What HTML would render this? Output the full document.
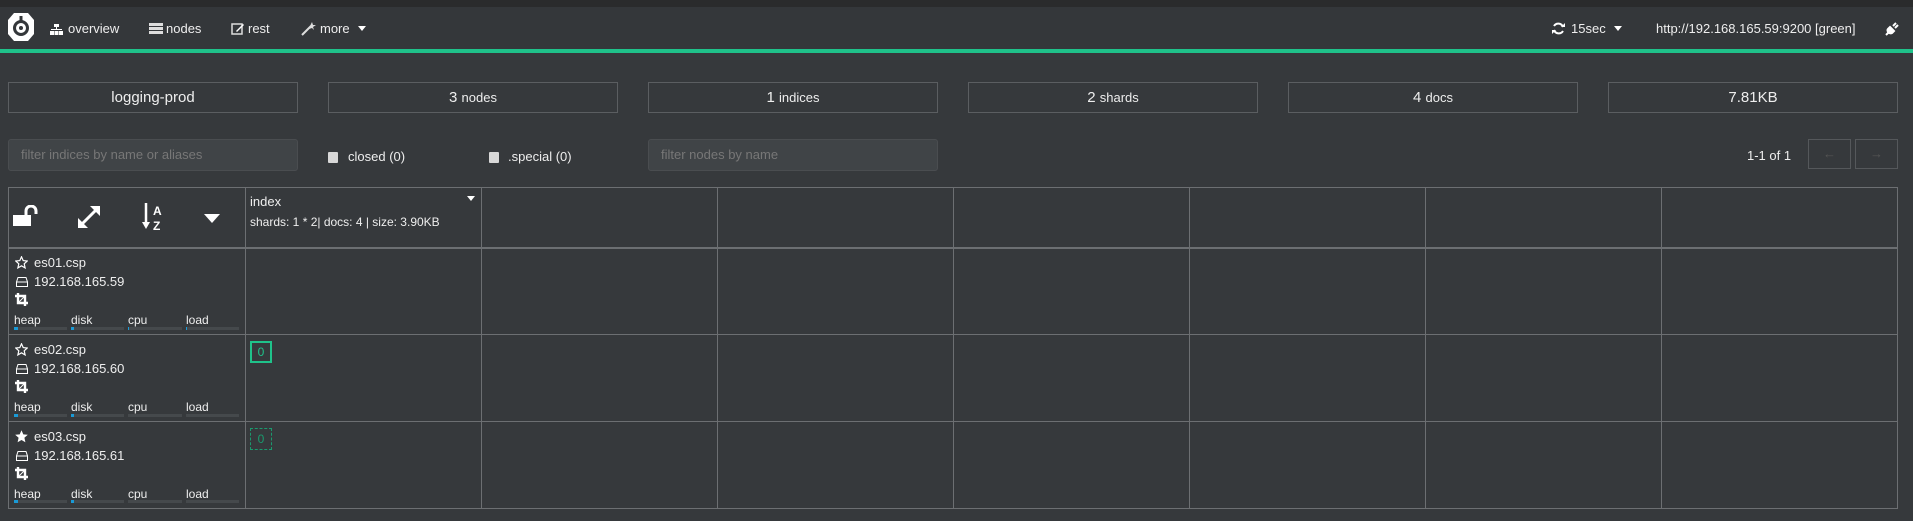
<!DOCTYPE html>
<html><head><meta charset="utf-8"><style>
*{box-sizing:border-box;margin:0;padding:0}
body{width:1913px;height:521px;background:#36393c;font-family:"Liberation Sans",sans-serif;color:#eee;position:relative;overflow:hidden;font-size:13px}
.a{position:absolute}
.top{left:0;top:0;width:1913px;height:7px;background:#2a2b2c}
.nav{left:0;top:7px;width:1913px;height:42px;background:#34373a}
.green{left:0;top:49px;width:1913px;height:4px;background:#1fc28a}
.t{position:absolute;white-space:nowrap;line-height:1}
.box{position:absolute;top:82px;height:31px;width:290px;border:1px solid #5b5e61;text-align:center;line-height:29px;font-size:15px}
.box small{font-size:13px}
.inp{position:absolute;top:139px;height:32px;background:#404447;border:1px solid #4a4d50;border-radius:3px;color:#777;font-size:13px;line-height:30px;padding-left:12px}
.cb{position:absolute;top:152px;width:10px;height:11px;background:#d8d8d8;border-radius:1px}
.btn{position:absolute;top:139px;width:43px;height:30px;border:1px solid #55585b;color:#555;text-align:center;line-height:28px}
.hl{position:absolute;height:2px;background:#6c6f72}
.vl{position:absolute;width:1px;background:#6c6f72}
.bar{position:absolute;height:3px;background:#45494c}
.bar i{position:absolute;left:0;top:0;height:3px;width:4px;background:#1a9ad6}
</style></head><body>
<div class="a top"></div><div class="a nav"></div><div class="a green"></div>
<svg class="a" style="left:8px;top:12px" width="26" height="30" viewBox="0 0 26 30"><path d="M6 1 L20 1 L26 8 L26 22 L20 29 L6 29 L0 22 L0 8Z" fill="#fff"/><circle cx="13" cy="16" r="6.5" fill="none" stroke="#34373a" stroke-width="3"/><rect x="11.5" y="4" width="3" height="7" fill="#34373a"/><circle cx="13" cy="16" r="2" fill="#34373a"/></svg>
<svg class="a" style="left:50px;top:24px" width="13" height="11"><rect x="4" y="0" width="5" height="3" fill="#fff"/><rect x="6" y="3" width="1" height="3" fill="#fff"/><rect x="1" y="5" width="11" height="1" fill="#fff"/><rect x="0" y="7" width="4" height="4" fill="#fff"/><rect x="4.5" y="7" width="4" height="4" fill="#fff"/><rect x="9" y="7" width="4" height="4" fill="#fff"/></svg>
<div class="t" style="left:68px;top:22px;font-size:13px">overview</div>
<svg class="a" style="left:149px;top:23px" width="14" height="12"><rect x="0" y="0" width="14" height="3" fill="#ddd"/><rect x="0" y="4" width="14" height="3" fill="#ddd"/><rect x="0" y="8" width="14" height="3" fill="#ddd"/></svg>
<div class="t" style="left:166px;top:22px">nodes</div>
<svg class="a" style="left:231px;top:22px" width="14" height="13"><rect x="1" y="2" width="10" height="10" fill="none" stroke="#ddd" stroke-width="1.5"/><path d="M5 9 L12 2 L13 3 L6 10Z" fill="#fff"/></svg>
<div class="t" style="left:248px;top:22px">rest</div>
<svg class="a" style="left:301px;top:22px" width="15" height="14"><path d="M1 13 L10 4" stroke="#ddd" stroke-width="2"/><path d="M11 0 L12 3 L15 3 L12 5 L13 8 L11 6 L8 7 L9 4 Z" fill="#ddd"/></svg>
<div class="t" style="left:320px;top:22px">more</div>
<svg class="a" style="left:358px;top:26px" width="8" height="5"><path d="M0 0 L8 0 L4 5Z" fill="#fff"/></svg>
<svg class="a" style="left:1552px;top:22px" width="13" height="13" viewBox="0 0 13 13"><path d="M11 5 A5 5 0 0 0 2 4" fill="none" stroke="#fff" stroke-width="2"/><path d="M2 8 A5 5 0 0 0 11 9" fill="none" stroke="#fff" stroke-width="2"/><path d="M9 5 L13 5 L13 1Z M0 8 L4 8 L0 12Z" fill="#fff"/></svg>
<div class="t" style="left:1571px;top:22px">15sec</div>
<svg class="a" style="left:1614px;top:26px" width="8" height="5"><path d="M0 0 L8 0 L4 5Z" fill="#fff"/></svg>
<div class="t" style="left:1656px;top:22px">http://192.168.165.59:9200 [green]</div>
<svg class="a" style="left:1885px;top:22px" width="14" height="14"><path d="M1 13 L4 10 M5 5 L9 9 L7 11 Q5 12 3 10 Q2 8 3 7Z M8 4 L11 1 M10 6 L13 3" stroke="#fff" stroke-width="2" fill="#fff"/></svg>

<div class="box" style="left:8px">logging-prod</div>
<div class="box" style="left:328px">3 <small>nodes</small></div>
<div class="box" style="left:648px">1 <small>indices</small></div>
<div class="box" style="left:968px">2 <small>shards</small></div>
<div class="box" style="left:1288px">4 <small>docs</small></div>
<div class="box" style="left:1608px">7.81KB</div>

<div class="inp" style="left:8px;width:290px">filter indices by name or aliases</div>
<div class="cb" style="left:328px"></div><div class="t" style="left:348px;top:150px">closed (0)</div>
<div class="cb" style="left:489px"></div><div class="t" style="left:508px;top:150px">.special (0)</div>
<div class="inp" style="left:648px;width:290px">filter nodes by name</div>
<div class="t" style="left:1747px;top:149px">1-1 of 1</div>
<div class="btn" style="left:1808px">←</div><div class="btn" style="left:1855px">→</div>

<!-- table grid -->
<div class="hl" style="left:8px;top:187px;width:1890px;height:1px"></div>
<div class="hl" style="left:8px;top:247px;width:1890px"></div>
<div class="hl" style="left:8px;top:334px;width:1890px;height:1px"></div>
<div class="hl" style="left:8px;top:421px;width:1890px;height:1px"></div>
<div class="hl" style="left:8px;top:508px;width:1890px;height:1px"></div>
<div class="vl" style="left:8px;top:187px;height:322px"></div>
<div class="vl" style="left:245px;top:187px;height:322px"></div>
<div class="vl" style="left:481px;top:187px;height:322px"></div>
<div class="vl" style="left:717px;top:187px;height:322px"></div>
<div class="vl" style="left:953px;top:187px;height:322px"></div>
<div class="vl" style="left:1189px;top:187px;height:322px"></div>
<div class="vl" style="left:1425px;top:187px;height:322px"></div>
<div class="vl" style="left:1661px;top:187px;height:322px"></div>
<div class="vl" style="left:1897px;top:187px;height:322px"></div>

<svg class="a" style="left:13px;top:205px" width="26" height="21"><rect x="0" y="10" width="18" height="11" fill="#fff"/><path d="M13 10 V6 A5 5 0 0 1 23 6 V9" fill="none" stroke="#fff" stroke-width="3"/></svg>
<svg class="a" style="left:77px;top:205px" width="24" height="24"><path d="M3 21 L21 3" stroke="#fff" stroke-width="3"/><path d="M13 1 L23 1 L23 11Z M1 13 L1 23 L11 23Z" fill="#fff"/></svg>
<svg class="a" style="left:142px;top:203px" width="25" height="28"><path d="M4 0 V22" stroke="#fff" stroke-width="2.5"/><path d="M0 19 L8 19 L4 26Z" fill="#fff"/><text x="11" y="12" font-family="Liberation Sans" font-weight="bold" font-size="12" fill="#fff">A</text><text x="11" y="27" font-family="Liberation Sans" font-weight="bold" font-size="12" fill="#fff">Z</text></svg>
<svg class="a" style="left:204px;top:214px" width="16" height="9"><path d="M0 0 L16 0 L8 9Z" fill="#fff"/></svg>
<div class="t" style="left:250px;top:195px">index</div>
<svg class="a" style="left:467px;top:196px" width="8" height="5"><path d="M0 0 L8 0 L4 5Z" fill="#fff"/></svg>
<div class="t" style="left:250px;top:216px;font-size:12px">shards: 1 * 2| docs: 4 | size: 3.90KB</div>

<!-- node rows -->
<div class="a" style="left:0;top:248px">
 <svg class="a" style="left:15px;top:8px" width="13" height="13"><path d="M6.5 0.8 L8.2 4.6 L12.3 5 L9.2 7.8 L10.1 11.9 L6.5 9.8 L2.9 11.9 L3.8 7.8 L0.7 5 L4.8 4.6Z" fill="none" stroke="#fff" stroke-width="1.2"/></svg>
 <div class="t" style="left:34px;top:8px">es01.csp</div>
 <svg class="a" style="left:16px;top:29px" width="12" height="10"><path d="M2 0.5 H10 L11.5 5 V9.5 H0.5 V5Z M0.5 5 H11.5" fill="none" stroke="#fff" stroke-width="1"/></svg>
 <div class="t" style="left:34px;top:27px">192.168.165.59</div>
 <svg class="a" style="left:15px;top:45px" width="13" height="13"><path d="M3 0 V10 H13 M0 3 H10 V13" fill="none" stroke="#fff" stroke-width="2.4"/><path d="M4 9 L9 4" stroke="#fff"/></svg>
 <div class="t" style="left:14px;top:66px;font-size:12px">heap</div><div class="t" style="left:71px;top:66px;font-size:12px">disk</div><div class="t" style="left:128px;top:66px;font-size:12px">cpu</div><div class="t" style="left:186px;top:66px;font-size:12px">load</div>
 <div class="bar" style="left:14px;top:79px;width:53px"><i></i></div><div class="bar" style="left:71px;top:79px;width:53px"><i style="width:3px"></i></div><div class="bar" style="left:128px;top:79px;width:54px"><i style="width:1px"></i></div><div class="bar" style="left:186px;top:79px;width:53px"><i style="width:1px"></i></div>
</div>
<div class="a" style="left:0;top:335px">
 <svg class="a" style="left:15px;top:8px" width="13" height="13"><path d="M6.5 0.8 L8.2 4.6 L12.3 5 L9.2 7.8 L10.1 11.9 L6.5 9.8 L2.9 11.9 L3.8 7.8 L0.7 5 L4.8 4.6Z" fill="none" stroke="#fff" stroke-width="1.2"/></svg>
 <div class="t" style="left:34px;top:8px">es02.csp</div>
 <svg class="a" style="left:16px;top:29px" width="12" height="10"><path d="M2 0.5 H10 L11.5 5 V9.5 H0.5 V5Z M0.5 5 H11.5" fill="none" stroke="#fff" stroke-width="1"/></svg>
 <div class="t" style="left:34px;top:27px">192.168.165.60</div>
 <svg class="a" style="left:15px;top:45px" width="13" height="13"><path d="M3 0 V10 H13 M0 3 H10 V13" fill="none" stroke="#fff" stroke-width="2.4"/><path d="M4 9 L9 4" stroke="#fff"/></svg>
 <div class="t" style="left:14px;top:66px;font-size:12px">heap</div><div class="t" style="left:71px;top:66px;font-size:12px">disk</div><div class="t" style="left:128px;top:66px;font-size:12px">cpu</div><div class="t" style="left:186px;top:66px;font-size:12px">load</div>
 <div class="bar" style="left:14px;top:79px;width:53px"><i></i></div><div class="bar" style="left:71px;top:79px;width:53px"><i style="width:3px"></i></div><div class="bar" style="left:128px;top:79px;width:54px"><i style="width:0"></i></div><div class="bar" style="left:186px;top:79px;width:53px"><i style="width:0"></i></div>
</div>
<div class="a" style="left:0;top:422px">
 <svg class="a" style="left:15px;top:8px" width="13" height="13"><path d="M6.5 0.3 L8.3 4.4 L12.8 4.8 L9.4 7.8 L10.4 12.3 L6.5 10 L2.6 12.3 L3.6 7.8 L0.2 4.8 L4.7 4.4Z" fill="#fff"/></svg>
 <div class="t" style="left:34px;top:8px">es03.csp</div>
 <svg class="a" style="left:16px;top:29px" width="12" height="10"><path d="M2 0.5 H10 L11.5 5 V9.5 H0.5 V5Z M0.5 5 H11.5" fill="none" stroke="#fff" stroke-width="1"/></svg>
 <div class="t" style="left:34px;top:27px">192.168.165.61</div>
 <svg class="a" style="left:15px;top:45px" width="13" height="13"><path d="M3 0 V10 H13 M0 3 H10 V13" fill="none" stroke="#fff" stroke-width="2.4"/><path d="M4 9 L9 4" stroke="#fff"/></svg>
 <div class="t" style="left:14px;top:66px;font-size:12px">heap</div><div class="t" style="left:71px;top:66px;font-size:12px">disk</div><div class="t" style="left:128px;top:66px;font-size:12px">cpu</div><div class="t" style="left:186px;top:66px;font-size:12px">load</div>
 <div class="bar" style="left:14px;top:78px;width:53px"><i></i></div><div class="bar" style="left:71px;top:78px;width:53px"><i style="width:3px"></i></div><div class="bar" style="left:128px;top:78px;width:54px"><i style="width:0"></i></div><div class="bar" style="left:186px;top:78px;width:53px"><i style="width:0"></i></div>
</div>
<div class="a" style="left:250px;top:341px;width:22px;height:22px;border:2px solid #1fc28a;color:#1fc28a;text-align:center;line-height:18px;font-size:12px">0</div>
<div class="a" style="left:250px;top:428px;width:22px;height:22px;border:1px dashed #1a9a6e;color:#1a9a6e;text-align:center;line-height:20px;font-size:12px">0</div>
</body></html>
